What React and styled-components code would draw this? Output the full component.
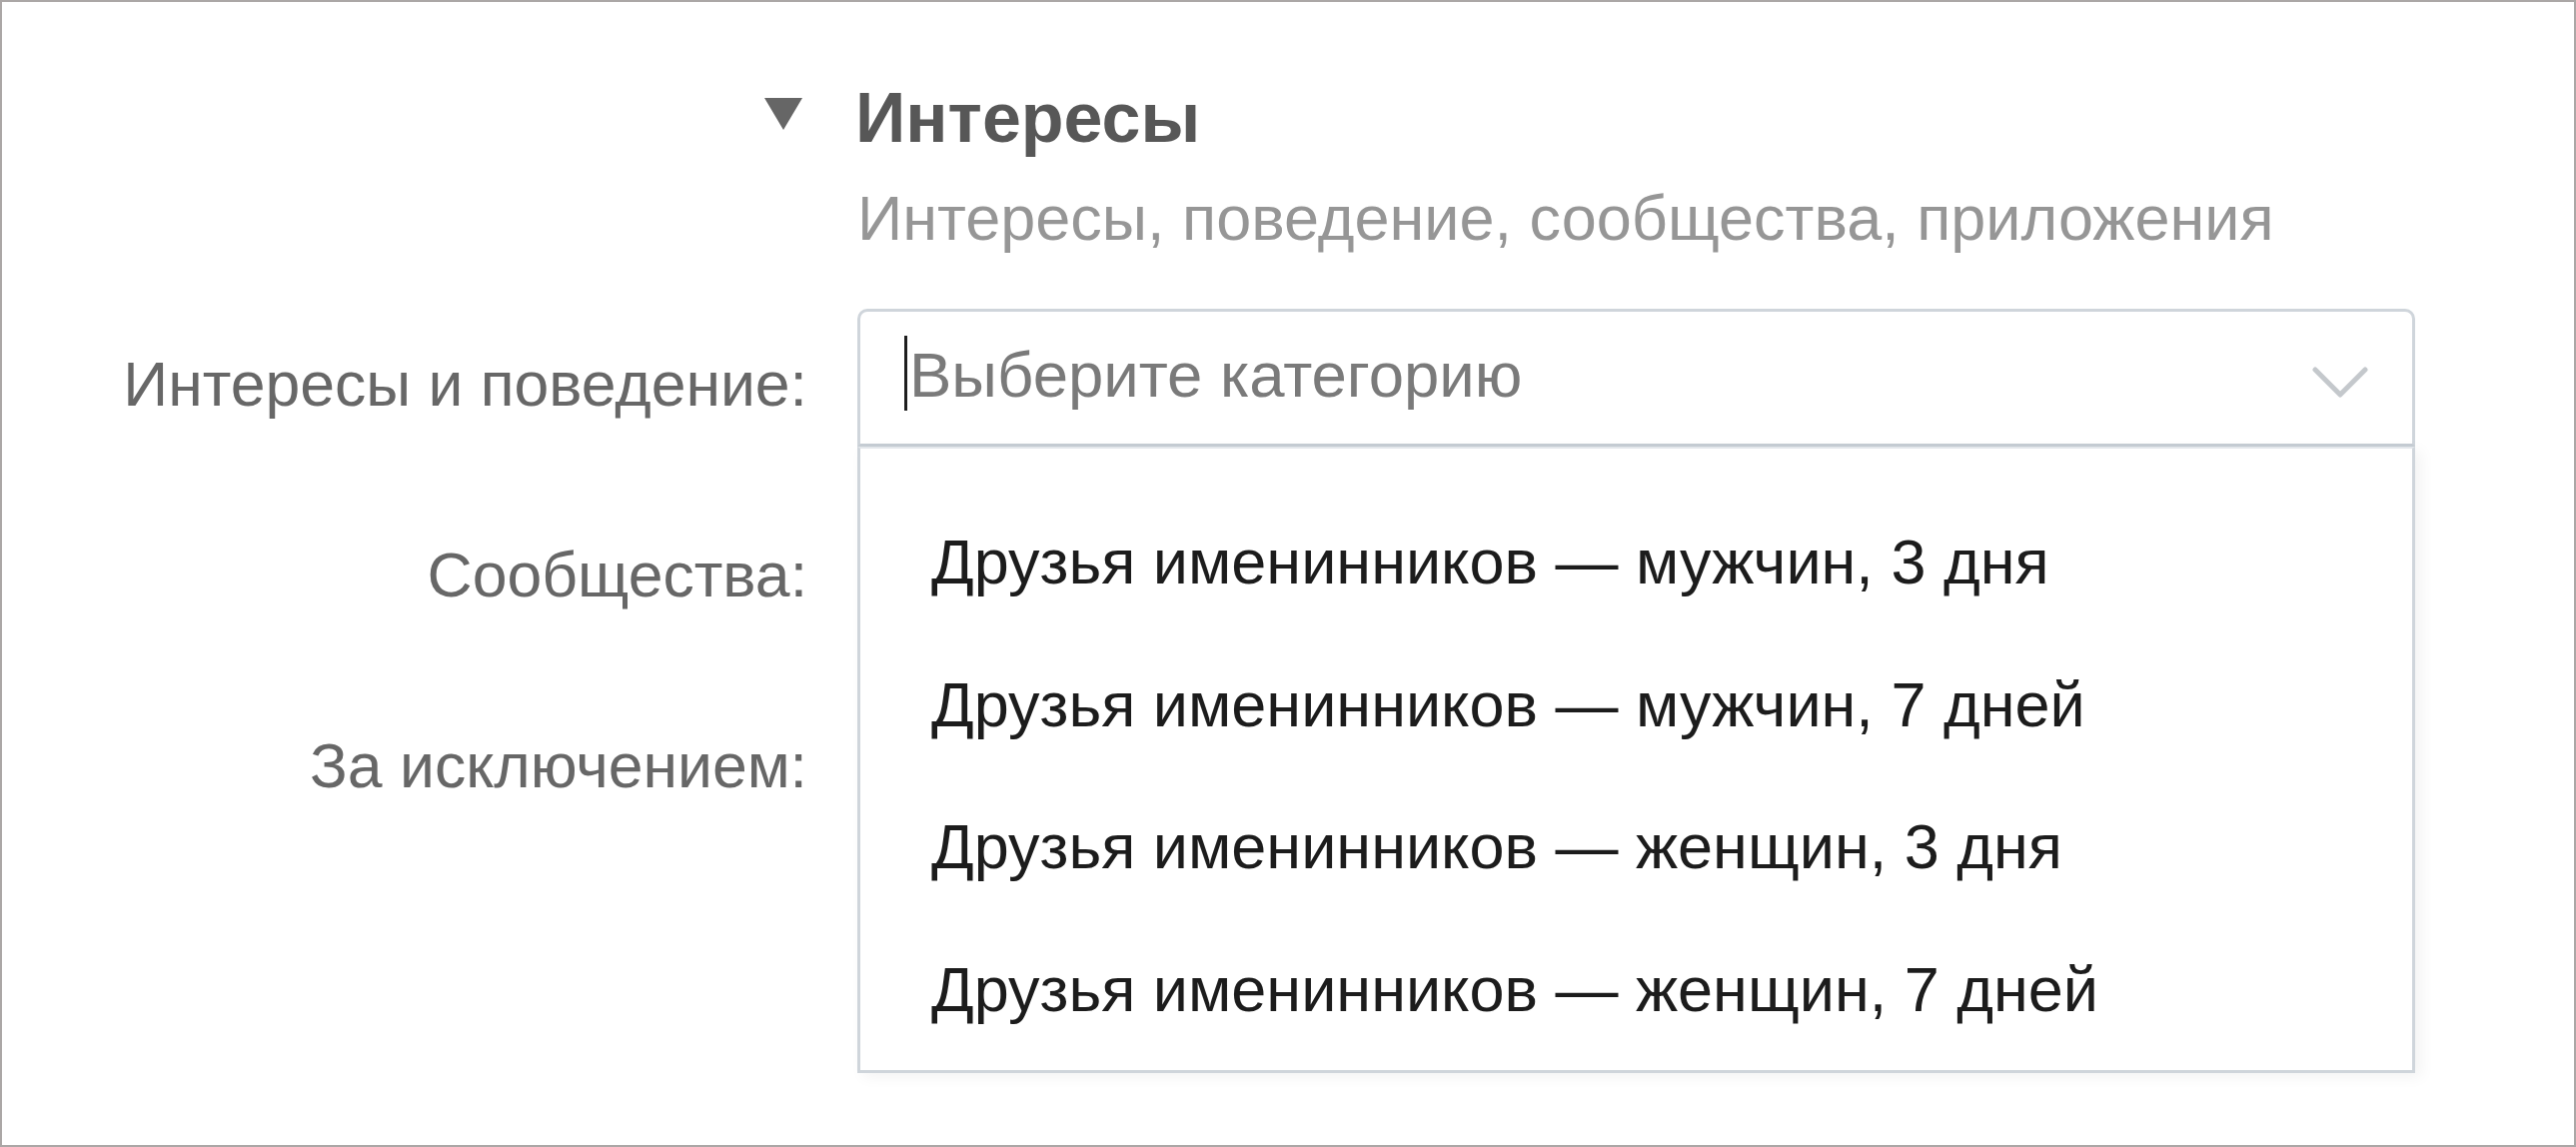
import React from "react";
import styled, { createGlobalStyle } from "styled-components";

const GlobalStyle = createGlobalStyle`
  html, body {
    margin: 0;
    padding: 0;
    background: #ffffff;
  }
  body {
    font-family: "Liberation Sans", Arial, "Helvetica Neue", sans-serif;
  }
  * { box-sizing: border-box; }
`;

const Frame = styled.div`
  width: 2578px;
  height: 1148px;
  border: 2px solid #aba7a6;
  background: #ffffff;
  padding-top: 76px;
  overflow: hidden;
`;

const Grid = styled.div`
  display: grid;
  grid-template-columns: 806px 1559px;
  column-gap: 50px;
`;

const Header = styled(Grid)`
  align-items: start;
`;

const Toggle = styled.span`
  justify-self: end;
  margin-right: 5px;
  margin-top: 20px;
  width: 0;
  height: 0;
  border-left: 19px solid transparent;
  border-right: 19px solid transparent;
  border-top: 32px solid #666666;
`;

const TitleBlock = styled.div`
  display: flex;
  flex-direction: column;
`;

const Title = styled.h2`
  margin: 0 0 0 -2px;
  font-size: 70px;
  line-height: 80px;
  font-weight: 700;
  color: #575757;
`;

const Subtitle = styled.div`
  margin-top: 24px;
  font-size: 63px;
  line-height: 72px;
  color: #969696;
  white-space: nowrap;
`;

const Form = styled.div`
  margin-top: 55px;
  display: flex;
  flex-direction: column;
  gap: 53px;
`;

const FieldRow = styled(Grid)`
  height: 138px;
  align-items: start;
`;

const Label = styled.label`
  text-align: right;
  padding-top: 39px;
  font-size: 62.5px;
  line-height: 72px;
  color: #676767;
  white-space: nowrap;
`;

const Combo = styled.div`
  position: relative;
  height: 138px;
`;

const InputBox = styled.div`
  height: 138px;
  display: flex;
  align-items: center;
  padding: 3px 44px 0 44px;
  border: 3px solid #cfd5db;
  border-bottom-color: ${(p) => (p.$open ? "#c6cdd4" : "#cfd5db")};
  border-radius: ${(p) => (p.$open ? "10px 10px 0 0" : "10px")};
  background: #ffffff;
`;

const Caret = styled.span`
  width: 3px;
  height: 75px;
  background: #1e1e1e;
  margin-right: 2px;
  margin-bottom: 12px;
  flex: none;
`;

const Placeholder = styled.span`
  font-size: 63.5px;
  line-height: 72px;
  margin-bottom: 10px;
  color: #7a7a7a;
  white-space: nowrap;
`;

const Chevron = styled.svg`
  margin-left: auto;
  margin-top: 7px;
  flex: none;
`;

const Dropdown = styled.ul`
  position: absolute;
  top: 100%;
  left: 0;
  right: 0;
  z-index: 2;
  margin: 0;
  padding: 42px 0 10px;
  list-style: none;
  background: #ffffff;
  border: 3px solid #cfd5db;
  border-top: 2px solid #e3e7eb;
  box-shadow: 6px 4px 14px rgba(0, 0, 0, 0.05);
`;

const Option = styled.li`
  height: 142.5px;
  display: flex;
  align-items: center;
  padding-left: 71px;
  font-size: 63px;
  line-height: 72px;
  color: #1c1c1c;
  white-space: nowrap;
`;

const options = [
  "Друзья именинников — мужчин, 3 дня",
  "Друзья именинников — мужчин, 7 дней",
  "Друзья именинников — женщин, 3 дня",
  "Друзья именинников — женщин, 7 дней",
];

function ChevronIcon() {
  return (
    <Chevron width="56" height="32" viewBox="0 0 56 32" aria-hidden="true">
      <polyline
        points="3,3 28,28 53,3"
        fill="none"
        stroke="#c4c8cc"
        strokeWidth="5"
        strokeLinecap="round"
        strokeLinejoin="round"
      />
    </Chevron>
  );
}

export default function App() {
  return (
    <>
      <GlobalStyle />
      <Frame>
        <Header>
          <Toggle />
          <TitleBlock>
            <Title>Интересы</Title>
            <Subtitle>Интересы, поведение, сообщества, приложения</Subtitle>
          </TitleBlock>
        </Header>
        <Form>
          <FieldRow>
            <Label>Интересы и поведение:</Label>
            <Combo>
              <InputBox $open>
                <Caret />
                <Placeholder>Выберите категорию</Placeholder>
                <ChevronIcon />
              </InputBox>
              <Dropdown>
                {options.map((o) => (
                  <Option key={o}>{o}</Option>
                ))}
              </Dropdown>
            </Combo>
          </FieldRow>
          <FieldRow>
            <Label>Сообщества:</Label>
            <Combo>
              <InputBox />
            </Combo>
          </FieldRow>
          <FieldRow>
            <Label>За исключением:</Label>
            <Combo>
              <InputBox />
            </Combo>
          </FieldRow>
        </Form>
      </Frame>
    </>
  );
}
